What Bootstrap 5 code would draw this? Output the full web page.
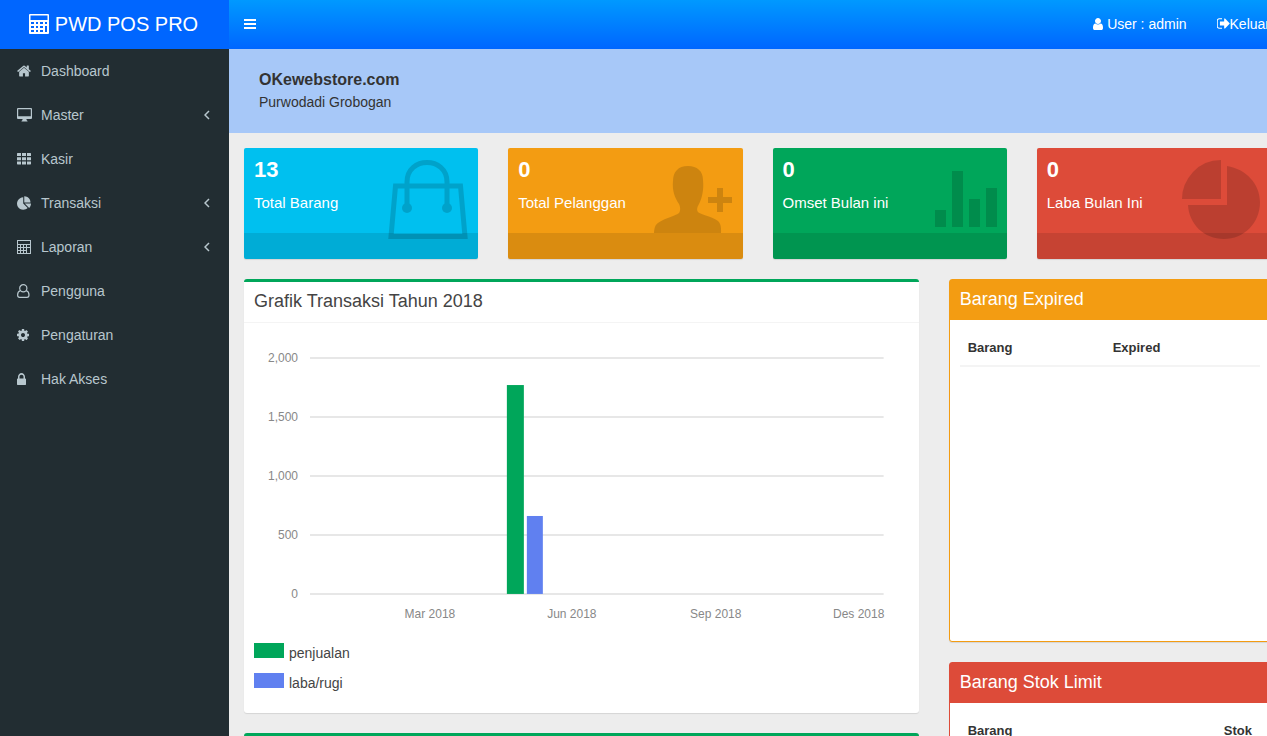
<!DOCTYPE html>
<html lang="id">
<head>
<meta charset="utf-8">
<meta name="viewport" content="width=device-width, initial-scale=1">
<title>PWD POS PRO</title>
<link href="https://cdn.jsdelivr.net/npm/bootstrap@5.3.0/dist/css/bootstrap.min.css" rel="stylesheet">
<style>
html, body { height: 100%; overflow: hidden; }
body { font-family: "Liberation Sans", Arial, sans-serif; font-size: 14px; line-height: 20px; color: #333; background: #ededed; }
a { text-decoration: none; }
/* The dashboard runs slightly past the right edge of the window */
.shell { margin-right: -19px; }
.side { width: 229px; background: #222d32; }
.brand { height: 49px; padding: 0 2px 2px 0; background: #0066ff; color: #fff; font-size: 20px; gap: 6px; }
.side .nav-link { height: 44px; padding: 0 19px 0 17px; color: #b8c7ce; display: flex; align-items: center; }
.side .nav-link:hover { color: #fff; }
.side .ico { width: 24px; display: flex; }
.topbar { height: 49px; padding-bottom: 2px; background: linear-gradient(#0099ff, #0066ff); }
.topbar a, .topbar button { color: #fff; }
.topbar button { padding: 8px 15px; }
.user-link { margin-right: 30px; }
.hero { background: #a7c8f8; height: 84px; padding: 21px 30px 0; }
.hero h1 { font-size: 16px; line-height: 20px; font-weight: 700; margin: 0 0 2px; }
.g30 { --bs-gutter-x: 30px; }
.page { padding: 15px 15px 0; }
.stat { border-radius: 2px; color: #fff; overflow: hidden; position: relative; margin-bottom: 20px; box-shadow: 0 1px 1px rgba(0,0,0,.1); }
.stat-body { height: 85px; padding: 10px; }
.stat-num { font-size: 22px; line-height: 24px; font-weight: 700; margin-bottom: 11px; }
.stat-label { font-size: 15px; line-height: 20px; }
.stat-foot { height: 26px; background: rgba(0,0,0,.1); }
.stat svg { position: absolute; right: 10px; top: 10px; width: 80px; height: 84px; fill: #000; stroke: #000; stroke-width: 0; opacity: .15; }
.aqua { background: #00c0ef; }
.orange { background: #f39c12; }
.green { background: #00a65a; }
.red { background: #dd4b39; }
.panel { background: #fff; border-radius: 3px; margin-bottom: 20px; box-shadow: 0 1px 1px rgba(0,0,0,.1); }
.panel h2 { font-size: 18px; line-height: 20px; font-weight: 400; margin: 0; padding: 10px; }
.panel-top { border-top: 3px solid #00a65a; color: #444; }
.panel-top h2 { border-bottom: 1px solid #f4f4f4; padding: 9px 10px 11px; }
.panel-top .panel-main { padding: 10px 10px 20px; }
.chart { width: 100%; height: 300px; display: block; }
.chart text { font-size: 12px; fill: #888; }
.chart path { stroke: #e0e0e0; stroke-width: 1.5; }
.legend-list { display: grid; gap: 10px; margin: 10px 0 0; padding: 0; list-style: none; }
.legend-list li { display: flex; gap: 5px; }
.swatch { width: 30px; height: 15px; }
.blue { background: #6080f0; }
.panel-solid { border: 1px solid var(--tone); }
.panel-solid h2 { background: var(--tone); color: #fff; height: 40px; padding: 9px 10px; }
.panel-solid .panel-main { height: 321px; padding: 10px; }
.tone-orange { --tone: #f39c12; }
.tone-red { --tone: #dd4b39; }
.panel table { font-size: 13px; margin: 0; }
.panel .table th { padding: 8px; color: #333; border-bottom: 2px solid #f4f4f4; line-height: 19px; }
.c-item { width: 145px; }
</style>
</head>
<body>
<svg class="d-none" aria-hidden="true">
  <symbol id="calc" viewBox="0 0 20 20"><path fill-rule="evenodd" d="M1 0h18q1 0 1 1v18q0 1-1 1H1q-1 0-1-1V1Q0 0 1 0zM1.500 1.500v4.500h17V1.500zM2 8v2h3V8zm5 0v2h2V8zm4 0v2h3V8zm5 0v2h2V8zM2 12v2h3v-2zm5 0v2h2v-2zm4 0v2h3v-2zm5 0v6h2v-6zM2 16v2h3v-2zm5 0v2h2v-2zm4 0v2h3v-2z"/></symbol>
  <symbol id="chev" viewBox="0 0 6 10"><path d="M5 1 1 5l4 4" fill="none" stroke="currentColor" stroke-width="1.500"/></symbol>
</svg>
<div class="shell d-flex h-100">
  <aside class="side flex-shrink-0">
    <a href="#" class="brand d-flex align-items-center justify-content-center"><svg width="20" height="20" fill="currentColor"><use href="#calc"/></svg><span>PWD POS PRO</span></a>
    <nav class="nav flex-column">
      <a class="nav-link" href="#"><span class="ico"><svg width="14" height="14" viewBox="64 128 1664 1536" fill="currentColor"><path d="M1472 992v480q0 26-19 45t-45 19h-384v-384h-256v384h-384q-26 0-45-19t-19-45v-480q0-1 .5-3t.5-3l575-474 575 474q1 2 1 6zm223-69l-62 74q-8 9-21 11h-3q-13 0-21-7l-692-577-692 577q-12 8-24 7-13-2-21-11l-62-74q-8-10-7-23.500t11-21.500l719-599q32-26 76-26t76 26l244 204v-195q0-14 9-23t23-9h192q14 0 23 9t9 23v408l219 182q10 8 11 21.500t-7 23.500z"/></svg></span>Dashboard</a>
      <a class="nav-link" href="#"><span class="ico"><svg width="15" height="14" viewBox="0 0 15 14" fill="currentColor"><path fill-rule="evenodd" d="M1 0h13q1 0 1 1v9q0 1-1 1H9.500v1l1 1v.5h-6V13l1-1v-1H1q-1 0-1-1V1q0-1 1-1zM1.200 1.200v7h12.600v-7z"/></svg></span>Master<svg class="ms-auto" width="6" height="10"><use href="#chev"/></svg></a>
      <a class="nav-link" href="#"><span class="ico"><svg width="14" height="12" viewBox="0 0 14 12" fill="currentColor"><path d="M.5 0H4v3H0V.5zM5 0h4v3H5zM10 0h3.500l.5.500V3h-4zM0 4.200h4v3H0zm5 0h4v3H5zm5 0h4v3h-4zM0 8.500h4v3H.5L0 11zm5 0h4v3H5zm5 0h4V11l-.5.500H10z"/></svg></span>Kasir</a>
      <a class="nav-link" href="#"><span class="ico"><svg width="14" height="14" viewBox="0 0 1728 1664" fill="currentColor"><path d="M768 890l546 546q-106 108-247.500 168t-298.500 60q-209 0-385.500-103t-279.500-279.500-103-385.500 103-385.500 279.500-279.500 385.500-103v762zm187 6h773q0 157-60 298.500t-168 247.500zm709-128h-768v-768q209 0 385.500 103t279.500 279.500 103 385.500z"/></svg></span>Transaksi<svg class="ms-auto" width="6" height="10"><use href="#chev"/></svg></a>
      <a class="nav-link" href="#"><span class="ico"><svg width="14" height="14" viewBox="0 0 14 14" fill="currentColor"><path fill-rule="evenodd" d="M0 0h14v14H0zM1 1v3h12V1zM1 5v2h2V5zm3 0v2h2V5zm3 0v2h2V5zm3 0v2h3V5zM1 8v2h2V8zm3 0v2h2V8zm3 0v2h2V8zm3 0v5h3V8zM1 11v2h2v-2zm3 0v2h2v-2zm3 0v2h2v-2z"/></svg></span>Laporan<svg class="ms-auto" width="6" height="10"><use href="#chev"/></svg></a>
      <a class="nav-link" href="#"><span class="ico"><svg width="13" height="14" viewBox="0 0 13 14" fill="none" stroke="currentColor" stroke-width="1.200"><circle cx="6.300" cy="4.300" r="3.600"/><path d="M3.400 6.600C1.300 7.200.6 9 .6 11q0 2.400 2 2.400h7.400q2 0 2-2.400c0-2-.7-3.800-2.800-4.400"/></svg></span>Pengguna</a>
      <a class="nav-link" href="#"><span class="ico"><svg width="12" height="12" viewBox="128 128 1536 1536" fill="currentColor"><path d="M1152 896q0-106-75-181t-181-75-181 75-75 181 75 181 181 75 181-75 75-181zm512-109v222q0 12-8 23t-20 13l-185 28q-19 54-39 91 35 50 107 138 10 12 10 25t-9 23q-27 37-99 108t-94 71q-12 0-26-9l-138-108q-44 23-91 38-16 136-29 186-7 28-36 28h-222q-14 0-24.500-8.500t-11.500-21.500l-28-184q-49-16-90-37l-141 107q-10 9-25 9-14 0-25-11-126-114-165-168-7-10-7-23 0-12 8-23 15-21 51-66.500t54-70.500q-27-50-41-99l-183-27q-13-2-21-12.500t-8-23.500v-222q0-12 8-23t19-13l186-28q14-46 39-92-40-57-107-138-10-12-10-24 0-10 9-23 26-36 98.500-107.500t94.500-71.500q13 0 26 10l138 107q44-23 91-38 16-136 29-186 7-28 36-28h222q14 0 24.500 8.500t11.500 21.500l28 184q49 16 90 37l142-107q9-9 24-9 13 0 25 10 129 119 165 170 7 8 7 22 0 12-8 23-15 21-51 66.500t-54 70.500q26 50 41 98l183 28q13 2 21 12.500t8 23.500z"/></svg></span>Pengaturan</a>
      <a class="nav-link" href="#"><span class="ico"><svg width="9" height="12" viewBox="320 128 1152 1408" preserveAspectRatio="none" fill="currentColor"><path d="M640 768h512v-192q0-106-75-181t-181-75-181 75-75 181v192zm832 96v576q0 40-28 68t-68 28h-960q-40 0-68-28t-28-68v-576q0-40 28-68t68-28h32v-192q0-184 132-316t316-132 316 132 132 316v192h32q40 0 68 28t28 68z"/></svg></span>Hak Akses</a>
    </nav>
  </aside>
  <div class="flex-grow-1">
    <header class="topbar d-flex align-items-center">
      <button type="button" class="btn border-0 d-flex rounded-0 me-auto" aria-label="Menu"><svg width="12" height="10" fill="currentColor"><path d="M0 0h12v2H0zm0 4h12v2H0zm0 4h12v2H0z"/></svg></button>
      <a href="#" class="user-link d-flex align-items-center gap-1"><svg width="10" height="12" viewBox="256 128 1280 1536" fill="currentColor"><path d="M1536 1399q0 109-62.500 187t-150.500 78h-854q-88 0-150.500-78t-62.500-187q0-85 8.500-160.500t31.500-152 58.500-131 94-89 134.500-34.500q131 128 313 128t313-128q76 0 134.500 34.500t94 89 58.500 131 31.500 152 8.500 160.500zm-256-887q0 159-112.500 271.500t-271.500 112.500-271.500-112.500-112.500-271.500 112.500-271.500 271.500-112.500 271.500 112.500 112.500 271.500z"/></svg>User : admin</a>
      <a href="#" class="d-flex align-items-center me-3"><svg width="13" height="11" viewBox="96 256 1568 1280" fill="currentColor"><path d="M704 1440q0 4 1 20t.5 26.500-3 23.500-10 19.500-20.500 6.500h-320q-119 0-203.500-84.500t-84.500-203.500v-704q0-119 84.500-203.500t203.500-84.500h320q13 0 22.500 9.500t9.500 22.500q0 4 1 20t.5 26.500-3 23.500-10 19.500-20.500 6.500h-320q-66 0-113 47t-47 113v704q0 66 47 113t113 47h312l11.500 1 11.500 3 8 5.500 7 9 2 13.500zm928-544q0 26-19 45l-544 544q-19 19-45 19t-45-19-19-45v-288h-448q-26 0-45-19t-19-45v-384q0-26 19-45t45-19h448v-288q0-26 19-45t45-19 45 19l544 544q19 19 19 45z"/></svg>Keluar</a>
    </header>
    <section class="hero"><h1>OKewebstore.com</h1><div>Purwodadi Grobogan</div></section>
    <main class="page">
      <div class="row g30">
        <div class="col-3"><div class="stat aqua"><div class="stat-body"><div class="stat-num">13</div><div class="stat-label">Total Barang</div></div><div class="stat-foot"></div>
          <svg viewBox="0 0 80 84"><path d="M7.500 28h65l4.500 50.500H3z" fill="none" stroke-width="5"/><path d="M19 50V24C19 -2 59 -2 59 24v26" fill="none" stroke-width="5"/><circle cx="19" cy="50" r="5"/><circle cx="59" cy="50" r="5"/></svg></div></div>
        <div class="col-3"><div class="stat orange"><div class="stat-body"><div class="stat-num">0</div><div class="stat-label">Total Pelanggan</div></div><div class="stat-foot"></div>
          <svg viewBox="0 0 80 84"><path d="M35 8C25 8 20 14 20 23c-1 10 2 17 6 23 2 4 1 8 0 9-3 3-22 7-24 14-1 3-1 6-1 6h67s1-9-3-12c-7-5-19-7-20-9-2-3 0-6 1-8 3-6 5-14 4-24C50 13 44 8 35 8zm29 22h6v9h9v6h-9v9h-6v-9h-9v-6h9z"/></svg></div></div>
        <div class="col-3"><div class="stat green"><div class="stat-body"><div class="stat-num">0</div><div class="stat-label">Omset Bulan ini</div></div><div class="stat-foot"></div>
          <svg viewBox="0 0 80 84"><path d="M18 52h11v17H18zm17-39h11v56H35zm17 28h11v28H52zm17-11h11v39H69z"/></svg></div></div>
        <div class="col-3"><div class="stat red"><div class="stat-body"><div class="stat-num">0</div><div class="stat-label">Laba Bulan Ini</div></div><div class="stat-foot"></div>
          <svg viewBox="0 0 80 84"><path d="M40 2v39H1Q1 26 12 14T40 2zm6 6c19 3 33 18 33 36 0 21-16 37-36 37S8 66 7 47h39z"/></svg></div></div>
      </div>
      <div class="row g30">
        <div class="col-8">
          <section class="panel panel-top"><h2>Grafik Transaksi Tahun 2018</h2>
            <div class="panel-main">
              <svg class="chart" viewBox="0 0 655 300" role="img" aria-label="Grafik transaksi per bulan">
                <path d="M56 25h574M56 84h574M56 143h574M56 202h574M56 261h574"/>
                <g text-anchor="end"><text x="44" y="29">2,000</text><text x="44" y="88">1,500</text><text x="44" y="147">1,000</text><text x="44" y="206">500</text><text x="44" y="265">0</text></g>
                <rect x="253" y="52" width="17" height="209" fill="#00a65a"/><rect x="273" y="183" width="16" height="78" fill="#6080f0"/>
                <g text-anchor="middle"><text x="176" y="285">Mar 2018</text><text x="318" y="285">Jun 2018</text><text x="462" y="285">Sep 2018</text><text x="605" y="285">Des 2018</text></g>
              </svg>
              <ul class="legend-list"><li><span class="swatch green"></span>penjualan</li><li><span class="swatch blue"></span>laba/rugi</li></ul>
            </div>
          </section>
          <section class="panel panel-top"><div class="panel-main"></div></section>
        </div>
        <div class="col-4">
          <section class="panel panel-solid tone-orange"><h2>Barang Expired</h2><div class="panel-main"><table class="table"><thead><tr><th class="c-item" scope="col">Barang</th><th scope="col">Expired</th></tr></thead></table></div></section>
          <section class="panel panel-solid tone-red"><h2>Barang Stok Limit</h2><div class="panel-main"><table class="table"><thead><tr><th scope="col">Barang</th><th class="text-end" scope="col">Stok</th></tr></thead></table></div></section>
        </div>
      </div>
    </main>
  </div>
</div>
<script src="https://cdn.jsdelivr.net/npm/bootstrap@5.3.0/dist/js/bootstrap.bundle.min.js"></script>
</body>
</html>
